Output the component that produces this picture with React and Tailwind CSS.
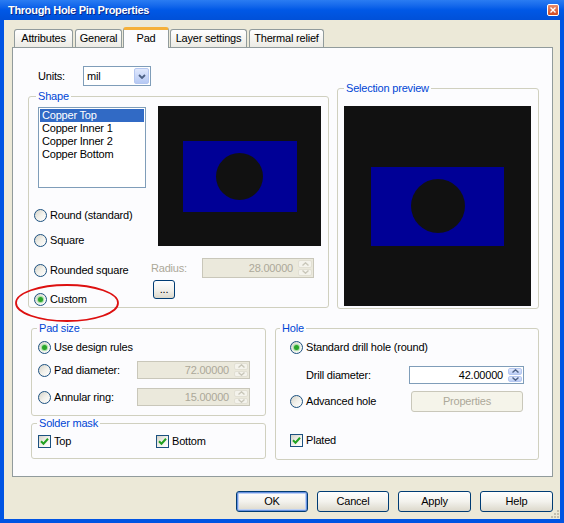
import React from 'react';

const listItems = ['Copper Top', 'Copper Inner 1', 'Copper Inner 2', 'Copper Bottom'];

function Radio({ checked }) {
  return (
    <span className="flex h-[13px] w-[13px] shrink-0 items-center justify-center rounded-full border border-[#1c5180] bg-linear-to-br from-[#d4d2c8] via-[#f1f0ea] to-white">
      {checked && <span className="h-[5px] w-[5px] rounded-full bg-[#2aa42a] shadow-[0_0_1px_1px_#9fdc9f]" />}
    </span>
  );
}

function Check({ checked }) {
  return (
    <span className="flex h-[13px] w-[13px] shrink-0 items-center justify-center border border-[#1c5180] bg-linear-to-br from-[#d4d2c8] via-[#f1f0ea] to-white">
      {checked && (
        <svg width="9" height="9" viewBox="0 0 9 9">
          <path d="M1 4.2 L3.5 6.7 L8 1.8" stroke="#21a121" strokeWidth="2" fill="none" />
        </svg>
      )}
    </span>
  );
}

function Arrow({ up, color }) {
  return (
    <svg width="7" height="4" viewBox="0 0 7 4">
      <path d={up ? 'M0.5 3.5 L3.5 0.8 L6.5 3.5' : 'M0.5 0.5 L3.5 3.2 L6.5 0.5'} stroke={color} strokeWidth="1.4" fill="none" />
    </svg>
  );
}

function Spin({ enabled }) {
  const half = enabled
    ? 'flex flex-1 items-center justify-center rounded-[2px] border border-[#b5c7f0] bg-linear-to-b from-[#e0e8fc] to-[#bccdf5]'
    : 'flex flex-1 items-center justify-center rounded-[2px] border border-[#e2e0d4] bg-[#f4f3ec]';
  const color = enabled ? '#4d6185' : '#c9c7ba';
  return (
    <div className="flex w-[15px] flex-col gap-[1px] py-[1px] pr-[1px]">
      <div className={half}><Arrow up color={color} /></div>
      <div className={half}><Arrow color={color} /></div>
    </div>
  );
}

function NumField({ value, enabled, className }) {
  return (
    <div className={`flex ${className} ${enabled ? 'border border-[#7f9db9] bg-white text-black' : 'border border-[#c9c7ba] bg-[#ebe9dc] text-[#aca899]'}`}>
      <span className="flex flex-1 items-center justify-end pr-[5px]">{value}</span>
      <Spin enabled={enabled} />
    </div>
  );
}

function XPButton({ children, className, isDefault, disabled }) {
  if (disabled) {
    return (
      <div className={`flex items-center justify-center rounded-[3px] border border-[#c9c7ba] bg-[#f5f4ea] text-[#aca899] ${className}`}>
        {children}
      </div>
    );
  }
  return (
    <div
      className={`flex items-center justify-center rounded-[3px] border border-[#003c74] bg-linear-to-b from-[#ffffff] via-[#f3f2ed] to-[#dcd8cb] ${
        isDefault ? 'shadow-[inset_0_0_0_1px_#6891e0,inset_0_0_0_2px_#bcd0f4]' : ''
      } ${className}`}
    >
      {children}
    </div>
  );
}

function Group({ title, className, legendClass, children }) {
  return (
    <fieldset className={`rounded-[3px] border border-[#d0d0bf] ${className}`}>
      <legend className={`px-[2px] text-[11px] leading-[13px] text-[#0046d5] ${legendClass}`}>{title}</legend>
      {children}
    </fieldset>
  );
}

function RadioRow({ label, checked, className }) {
  return (
    <div className={`flex h-[13px] items-center ${className}`}>
      <Radio checked={checked} />
      <span className="ml-[3px]">{label}</span>
    </div>
  );
}

function TitleBar() {
  return (
    <div className="flex h-[20px] items-center justify-between bg-linear-to-b from-[#2a7cf2] via-[#0058e6] to-[#0050d8] pl-[8px] pr-[5px]">
      <span className="text-[11px] font-bold tracking-[-0.3px] text-white [text-shadow:1px_1px_0_#0a2a8a]">
        Through Hole Pin Properties
      </span>
      <div className="flex h-[12px] w-[12px] items-center justify-center rounded-[2px] border border-white bg-linear-to-b from-[#e88a6a] to-[#d14a1e]">
        <svg width="6" height="6" viewBox="0 0 6 6">
          <path d="M0.5 0.5 L5.5 5.5 M5.5 0.5 L0.5 5.5" stroke="white" strokeWidth="1.4" />
        </svg>
      </div>
    </div>
  );
}

function Tabs() {
  const inactive = 'flex h-[18px] items-center justify-center rounded-t-[3px] border border-b-0 border-[#919b9c] bg-linear-to-b from-white to-[#ecebe5]';
  return (
    <div className="flex h-[27px] items-end pl-[10px]">
      <div className={`${inactive} w-[59px]`}>Attributes</div>
      <div className={`${inactive} ml-[2px] w-[47px]`}>General</div>
      <div className="relative z-10 ml-[1px] mb-[-1px] flex h-[21px] w-[46px] items-start justify-center rounded-t-[3px] border-x border-t-[3px] border-x-[#919b9c] border-t-[#f5b03a] bg-[#fcfcfe] pt-[2px]">
        Pad
      </div>
      <div className={`${inactive} ml-[1px] w-[77px]`}>Layer settings</div>
      <div className={`${inactive} ml-[2px] w-[75px]`}>Thermal relief</div>
    </div>
  );
}

function Select() {
  return (
    <div className="flex h-[20px] w-[68px] border border-[#7f9db9] bg-white">
      <span className="flex flex-1 items-center pl-[3px]">mil</span>
      <div className="m-[1px] flex w-[15px] items-center justify-center rounded-[2px] border border-[#b5c7f0] bg-linear-to-b from-[#e0e8fc] to-[#b6c9f4]">
        <svg width="8" height="5" viewBox="0 0 8 5">
          <path d="M1 1 L4 4 L7 1" stroke="#4d6185" strokeWidth="1.8" fill="none" />
        </svg>
      </div>
    </div>
  );
}

function Panel() {
  return (
    <div className="relative ml-[8px] h-[430px] w-[541px] border border-[#919b9c] bg-[#fcfcfe]">
      {/* top part */}
      <div className="flex items-start pl-[15px]">
        <div className="mt-[18px] w-[301px]">
          <div className="flex h-[20px] items-center">
            <span className="w-[55px] pl-[10px]">Units:</span>
            <Select />
          </div>
          <Group title="Shape" className="mt-[4px] pb-[1px]" legendClass="ml-[7px]">
            <div className="flex">
              <div className="w-[122px] pl-[5px]">
                <div className="ml-[4px] mt-[4px] h-[81px] w-[108px] border border-[#7f9db9] bg-white p-[1px]">
                  {listItems.map((t, i) => (
                    <div key={t} className={i === 0 ? 'h-[13px] bg-[#316ac5] pl-[2px] text-white' : 'h-[13px] pl-[2px]'}>
                      {t}
                    </div>
                  ))}
                </div>
                <RadioRow label="Round (standard)" className="mt-[21px]" />
                <RadioRow label="Square" className="mt-[12px]" />
                <RadioRow label="Rounded square" className="mt-[17px]" />
                <RadioRow label="Custom" checked className="mt-[16px]" />
              </div>
              <div>
                <div className="ml-[7px] mt-[3px] flex h-[140px] w-[163px] items-center justify-center bg-[#111111]">
                  <div className="flex h-[71px] w-[114px] items-center justify-center bg-[#000096]">
                    <div className="h-[47px] w-[47px] rounded-full bg-[#111111]" />
                  </div>
                </div>
                <div className="mt-[12px] flex h-[20px] items-center">
                  <span className="w-[51px] text-[#aca899]">Radius:</span>
                  <NumField value="28.00000" className="h-[20px] w-[112px]" />
                </div>
                <XPButton className="ml-[2px] mt-[2px] h-[19px] w-[22px]">...</XPButton>
              </div>
            </div>
          </Group>
        </div>
        <Group title="Selection preview" className="ml-[8px] mt-[34px] w-[202px]" legendClass="ml-[6px]">
          <div className="pb-[2px] pl-[6px] pt-[11px]">
            <div className="flex h-[200px] w-[187px] items-center justify-center bg-[#111111]">
              <div className="flex h-[79px] w-[133px] items-center justify-center bg-[#000096]">
                <div className="h-[54px] w-[54px] rounded-full bg-[#111111]" />
              </div>
            </div>
          </div>
        </Group>
      </div>

      {/* bottom part */}
      <div className="mt-[13px] flex items-start pl-[18px]">
        <div className="w-[235px]">
          <Group title="Pad size" legendClass="ml-[5px]">
            <div className="pb-[9px] pl-[6px]">
              <RadioRow label="Use design rules" checked className="mt-[6px]" />
              <div className="mt-[7px] flex h-[18px] items-center">
                <div className="flex w-[99px] items-center">
                  <Radio />
                  <span className="ml-[3px]">Pad diameter:</span>
                </div>
                <NumField value="72.00000" className="h-[18px] w-[113px]" />
              </div>
              <div className="mt-[9px] flex h-[18px] items-center">
                <div className="flex w-[99px] items-center">
                  <Radio />
                  <span className="ml-[3px]">Annular ring:</span>
                </div>
                <NumField value="15.00000" className="h-[18px] w-[113px]" />
              </div>
            </div>
          </Group>
          <Group title="Solder mask" className="mt-[1px]" legendClass="ml-[5px]">
            <div className="flex pb-[10px] pl-[6px] pt-[5px]">
              <div className="flex w-[118px] items-center">
                <Check checked />
                <span className="ml-[3px]">Top</span>
              </div>
              <div className="flex items-center">
                <Check checked />
                <span className="ml-[3px]">Bottom</span>
              </div>
            </div>
          </Group>
        </div>
        <Group title="Hole" className="ml-[9px] w-[264px]" legendClass="ml-[4px]">
          <div className="pb-[12px] pl-[14px]">
            <RadioRow label="Standard drill hole (round)" checked className="mt-[6px]" />
            <div className="mt-[12px] flex h-[18px] items-center pl-[16px]">
              <span className="w-[103px]">Drill diameter:</span>
              <NumField value="42.00000" enabled className="h-[18px] w-[115px]" />
            </div>
            <div className="mt-[7px] flex h-[21px] items-center">
              <div className="flex w-[121px] items-center">
                <Radio />
                <span className="ml-[3px]">Advanced hole</span>
              </div>
              <XPButton disabled className="h-[21px] w-[112px]">Properties</XPButton>
            </div>
            <div className="mt-[22px] flex h-[13px] items-center">
              <Check checked />
              <span className="ml-[3px]">Plated</span>
            </div>
          </div>
        </Group>
      </div>

      {/* red annotation around "Custom" */}
      <svg className="absolute left-[1px] top-[236px]" width="106" height="40" viewBox="0 0 106 40">
        <ellipse cx="53" cy="19" rx="51" ry="18" stroke="#dd1010" strokeWidth="1.8" fill="none" />
      </svg>
    </div>
  );
}

export default function App() {
  return (
    <div className="flex h-[523px] w-[564px] flex-col bg-[#0054e3] font-['Liberation_Sans',Arial,sans-serif] text-[11px] leading-[13px] tracking-[-0.2px] text-black">
      <TitleBar />
      <div className="relative mx-[4px] mb-[4px] flex flex-1 flex-col bg-[#ece9d8]">
        <Tabs />
        <Panel />
        <div className="mt-[14px] flex justify-end gap-[9px] pr-[7px]">
          <XPButton isDefault className="h-[21px] w-[72px]">OK</XPButton>
          <XPButton className="h-[21px] w-[72px]">Cancel</XPButton>
          <XPButton className="h-[21px] w-[73px]">Apply</XPButton>
          <XPButton className="h-[21px] w-[73px]">Help</XPButton>
        </div>
        <svg className="absolute bottom-0 right-0" width="10" height="10" viewBox="0 0 10 10">
          {[[7, 1], [7, 4], [4, 4], [7, 7], [4, 7], [1, 7]].map(([x, y]) => (
            <rect key={`${x}-${y}`} x={x} y={y} width="2" height="2" fill="#c3bfaf" />
          ))}
        </svg>
      </div>
    </div>
  );
}
